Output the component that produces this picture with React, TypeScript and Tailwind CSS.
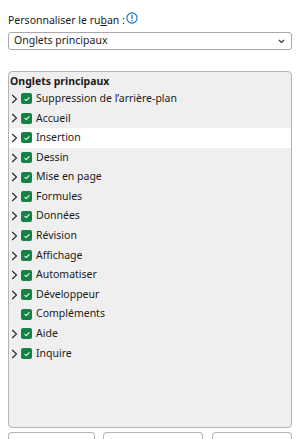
import React from "react";

const items: { label: string; expand: boolean; selected?: boolean }[] = [
  { label: "Suppression de l’arrière-plan", expand: true },
  { label: "Accueil", expand: true },
  { label: "Insertion", expand: true, selected: true },
  { label: "Dessin", expand: true },
  { label: "Mise en page", expand: true },
  { label: "Formules", expand: true },
  { label: "Données", expand: true },
  { label: "Révision", expand: true },
  { label: "Affichage", expand: true },
  { label: "Automatiser", expand: true },
  { label: "Développeur", expand: true },
  { label: "Compléments", expand: false },
  { label: "Aide", expand: true },
  { label: "Inquire", expand: true },
];

function Chevron() {
  return (
    <svg width="7" height="10" viewBox="0 0 7 10" className="shrink-0">
      <path d="M1.2 1 L5.5 5 L1.2 9" fill="none" stroke="#222" strokeWidth="1.1" />
    </svg>
  );
}

function Check() {
  return (
    <span className="flex h-[11px] w-[11px] shrink-0 items-center justify-center rounded-[2px] bg-[#138245]">
      <svg width="8" height="8" viewBox="0 0 8 8">
        <path d="M1.6 4.1 L3.2 5.6 L6.4 2.4" fill="none" stroke="#fff" strokeWidth="1.1" />
      </svg>
    </span>
  );
}

export default function App() {
  return (
    <div
      className="relative h-[439px] w-[300px] overflow-hidden bg-white text-[10.5px] text-[#1b1b1b]"
      style={{ fontFamily: '"Noto Sans", "Open Sans", sans-serif' }}
    >
      <div className="px-[8px] pt-[11px]">
        <div className="flex h-[19px] items-center gap-[1px]">
          <span>
            Personnaliser le ru<span className="underline">b</span>an :
          </span>
          <svg width="12" height="12" viewBox="0 0 12 12" className="mb-[6px]">
            <circle cx="6" cy="6" r="5.1" fill="#fff" stroke="#0f6cbd" strokeWidth="1.1" />
            <rect x="5.4" y="2.7" width="1.2" height="4.4" fill="#0f6cbd" />
            <rect x="5.4" y="8" width="1.2" height="1.2" fill="#0f6cbd" />
          </svg>
        </div>
        <div className="mt-[2px] flex h-[18px] w-[284px] items-center justify-between rounded-[3px] border border-[#a8a8a8] bg-white pl-[5px] pr-[6px]">
          <span>Onglets principaux</span>
          <svg width="7" height="5" viewBox="0 0 7 5">
            <path d="M1 1 L3.5 3.5 L6 1" fill="none" stroke="#333" strokeWidth="1.1" />
          </svg>
        </div>

        <div className="mt-[21px] h-[357px] w-[284px] rounded-[4px] border border-[#b4b4b4] bg-[#efefef] pt-[1px]">
          <div className="h-[16px] pl-[1px] font-bold leading-[17px]">Onglets principaux</div>
          {items.map((it) => (
            <div
              key={it.label}
              className={`flex h-[19.6px] items-center pl-[2px] ${it.selected ? "bg-white" : ""}`}
            >
              <span className="flex w-[10px] justify-start">{it.expand ? <Chevron /> : null}</span>
              <Check />
              <span className="ml-[4px] whitespace-nowrap">{it.label}</span>
            </div>
          ))}
        </div>

        <div className="mt-[4px] flex">
          <div className="h-[10px] w-[87px] rounded-t-[4px] border border-b-0 border-[#b4b4b4] bg-white" />
          <div className="ml-[8px] h-[10px] w-[100px] rounded-t-[4px] border border-b-0 border-[#b4b4b4] bg-white" />
          <div className="ml-[9px] h-[10px] w-[80px] rounded-t-[4px] border border-b-0 border-[#b4b4b4] bg-white" />
        </div>
      </div>
    </div>
  );
}
